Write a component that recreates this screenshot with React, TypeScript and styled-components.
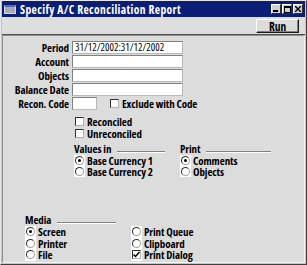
import React from 'react';
import styled, { createGlobalStyle } from 'styled-components';

const GlobalStyle = createGlobalStyle`
  html, body {
    margin: 0;
    padding: 0;
    background: #c0c0c0;
  }
  * {
    box-sizing: border-box;
  }
`;

const FONT = `"Open Sans", "Liberation Sans", Arial, sans-serif`;

const Window = styled.div`
  width: 307px;
  height: 265px;
  display: flex;
  flex-direction: column;
  background: #c4c4c4;
  border: 1px solid;
  border-color: #e8e8e8 #404040 #404040 #e8e8e8;
  padding: 0 1px 1px 1px;
  font-family: ${FONT};
  font-stretch: condensed;
  font-size: 11px;
  line-height: 11px;
  letter-spacing: -0.1px;
  font-weight: bold;
  color: #000;
`;

const TitleBar = styled.div`
  height: 16px;
  display: flex;
  align-items: center;
  padding: 0 2px 0 2px;
  background: #0a1e78;
  color: #fff;
  font-size: 11.5px;
  line-height: 13px;
  letter-spacing: 0.4px;
`;

const TitleIcon = styled.div`
  width: 12px;
  height: 9px;
  margin-right: 4px;
  background: #a8a8b8;
  border: 1px solid #d8d8e0;
  border-top: 2px solid #5a6aa0;
`;

const TitleText = styled.div`
  flex: 1;
  white-space: nowrap;
`;

const TitleButtons = styled.div`
  display: flex;
  gap: 1px;
`;

const TitleButton = styled.div`
  width: 10px;
  height: 10px;
  background: #d0d0d0;
  border: 1px solid;
  border-color: #fff #303030 #303030 #fff;
  display: flex;
  align-items: center;
  justify-content: center;
`;

const Toolbar = styled.div`
  height: 18px;
  display: flex;
  align-items: center;
  justify-content: flex-end;
  padding: 1px 6px 0 0;
  background: #dedede;
  border-bottom: 1px solid #505050;
`;

const RunButton = styled.div`
  width: 43px;
  height: 14px;
  display: flex;
  align-items: center;
  justify-content: center;
  background: #dcdcdc;
  border: 1px solid;
  border-color: #ffffff #1a1a1a #1a1a1a #ffffff;
  box-shadow: inset -1px -1px 0 #808080;
  font-size: 11.5px;
`;

const Panel = styled.div`
  flex: 1;
  background: #dcdcdc;
  border: 1px solid;
  border-color: #909090 #f4f4f4 #f4f4f4 #909090;
  padding: 5px 0 0 0;
  display: flex;
  flex-direction: column;
`;

const FieldGrid = styled.div`
  display: grid;
  grid-template-columns: 66px auto;
  grid-auto-rows: 13px;
  row-gap: 1px;
  column-gap: 3px;
  align-items: center;
`;

const Label = styled.div`
  text-align: right;
  white-space: nowrap;
`;

const FieldLine = styled.div`
  display: flex;
  align-items: center;
  height: 13px;
`;

const TextField = styled.div<{ $w: number }>`
  width: ${p => p.$w}px;
  height: 13px;
  background: #fff;
  border: 1px solid;
  border-color: #808080 #b8b8b8 #b8b8b8 #808080;
  font-size: 10.5px;
  font-weight: normal;
  letter-spacing: 0;
  padding-left: 2px;
  line-height: 11px;
  white-space: nowrap;
  overflow: hidden;
`;

const Section = styled.div<{ $left: number; $top: number }>`
  margin-left: ${p => p.$left}px;
  margin-top: ${p => p.$top}px;
`;

const Columns = styled.div<{ $gap: number }>`
  display: flex;
  gap: ${p => p.$gap}px;
`;

const Group = styled.div`
  width: 91px;
  display: flex;
  flex-direction: column;
`;

const GroupHeader = styled.div`
  height: 13px;
  display: flex;
  align-items: center;
  white-space: nowrap;
`;

const HeaderRule = styled.div`
  flex: 1;
  align-self: flex-end;
  margin: 0 0 2px 6px;
  height: 2px;
  border-top: 1px solid #808080;
  border-bottom: 1px solid #ffffff;
`;

const OptionRow = styled.div<{ $h?: number }>`
  height: ${p => p.$h ?? 11}px;
  display: flex;
  align-items: center;
  white-space: nowrap;
`;

const Indicator = styled.div`
  width: 11px;
  align-self: stretch;
  display: flex;
  align-items: center;
  justify-content: center;
  margin-right: 2px;
`;

const WhiteIndicator = styled(Indicator)`
  background: #fff;
`;

const Radio = styled.div<{ $on?: boolean }>`
  width: 9px;
  height: 9px;
  border-radius: 50%;
  background: #fff;
  border: 1px solid;
  border-color: #303030 #a0a0a0 #a0a0a0 #303030;
  display: flex;
  align-items: center;
  justify-content: center;
  &::after {
    content: '';
    display: ${p => (p.$on ? 'block' : 'none')};
    width: 3px;
    height: 3px;
    border-radius: 50%;
    background: #000;
  }
`;

const Box = styled.div`
  width: 9px;
  height: 9px;
  background: #fff;
  border: 1px solid;
  border-color: #303030 #b0b0b0 #b0b0b0 #303030;
  display: flex;
  align-items: center;
  justify-content: center;
`;

const ExcludeCheck = styled.div`
  display: flex;
  align-items: center;
  margin-left: 12px;
`;

const Tick = () => (
  <svg width="7" height="7" viewBox="0 0 7 7">
    <path d="M0.5 3.5 L2.5 5.5 L6.5 1" stroke="#000" strokeWidth="1.5" fill="none" />
  </svg>
);

type Opt = { label: string; kind: 'radio' | 'check'; on?: boolean };

const OptionList: React.FC<{ items: Opt[]; white?: boolean; h?: number }> = ({ items, white, h }) => (
  <>
    {items.map(o => {
      const Ind = white ? WhiteIndicator : Indicator;
      return (
        <OptionRow key={o.label} $h={h}>
          <Ind>
            {o.kind === 'radio' ? <Radio $on={o.on} /> : <Box>{o.on && <Tick />}</Box>}
          </Ind>
          {o.label}
        </OptionRow>
      );
    })}
  </>
);

export default function App() {
  return (
    <>
      <GlobalStyle />
      <Window>
        <TitleBar>
          <TitleIcon />
          <TitleText>Specify A/C Reconciliation Report</TitleText>
          <TitleButtons>
            <TitleButton>
              <svg width="6" height="6" viewBox="0 0 6 6"><rect x="0" y="4" width="5" height="2" fill="#000" /></svg>
            </TitleButton>
            <TitleButton>
              <svg width="7" height="7" viewBox="0 0 7 7"><rect x="0.5" y="0.5" width="6" height="6" fill="none" stroke="#000" /><rect x="0" y="0" width="7" height="2" fill="#000" /></svg>
            </TitleButton>
            <TitleButton>
              <svg width="6" height="6" viewBox="0 0 6 6"><path d="M0 0 L6 6 M6 0 L0 6" stroke="#000" strokeWidth="1.4" /></svg>
            </TitleButton>
          </TitleButtons>
        </TitleBar>
        <Toolbar>
          <RunButton>Run</RunButton>
        </Toolbar>
        <Panel>
          <FieldGrid>
            <Label>Period</Label>
            <TextField $w={111}>31/12/2002:31/12/2002</TextField>
            <Label>Account</Label>
            <TextField $w={111} />
            <Label>Objects</Label>
            <TextField $w={111} />
            <Label>Balance Date</Label>
            <TextField $w={111} />
            <Label>Recon. Code</Label>
            <FieldLine>
              <TextField $w={25} />
              <ExcludeCheck>
                <Indicator><Box /></Indicator>
                Exclude with Code
              </ExcludeCheck>
            </FieldLine>
          </FieldGrid>

          <Section $left={71} $top={5}>
            <OptionList
              h={12}
              items={[
                { label: 'Reconciled', kind: 'check' },
                { label: 'Unreconciled', kind: 'check' },
              ]}
            />
          </Section>

          <Section $left={71} $top={3}>
            <Columns $gap={15}>
              <Group>
                <GroupHeader>Values in<HeaderRule /></GroupHeader>
                <OptionList
                  white
                  items={[
                    { label: 'Base Currency 1', kind: 'radio', on: true },
                    { label: 'Base Currency 2', kind: 'radio' },
                  ]}
                />
              </Group>
              <Group>
                <GroupHeader>Print<HeaderRule /></GroupHeader>
                <OptionList
                  white
                  items={[
                    { label: 'Comments', kind: 'radio', on: true },
                    { label: 'Objects', kind: 'radio' },
                  ]}
                />
              </Group>
            </Columns>
          </Section>

          <Section $left={22} $top={36}>
            <Columns $gap={15}>
              <Group>
                <GroupHeader>Media<HeaderRule /></GroupHeader>
                <OptionList
                  white
                  h={11.5}
                  items={[
                    { label: 'Screen', kind: 'radio', on: true },
                    { label: 'Printer', kind: 'radio' },
                    { label: 'File', kind: 'radio' },
                  ]}
                />
              </Group>
              <Group>
                <GroupHeader>&nbsp;</GroupHeader>
                <OptionList
                  white
                  h={11.5}
                  items={[
                    { label: 'Print Queue', kind: 'radio' },
                    { label: 'Clipboard', kind: 'radio' },
                    { label: 'Print Dialog', kind: 'check', on: true },
                  ]}
                />
              </Group>
            </Columns>
          </Section>
        </Panel>
      </Window>
    </>
  );
}
